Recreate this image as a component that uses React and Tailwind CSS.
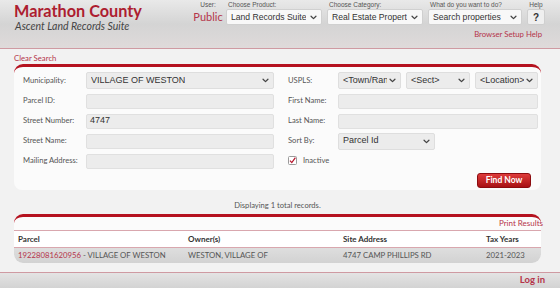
import React from "react";

const Chevron = ({ className = "" }) => (
  <svg viewBox="0 0 10 6" className={"w-[7px] h-[5px] " + className} fill="none" stroke="#444" strokeWidth="1.8" strokeLinecap="round" strokeLinejoin="round">
    <path d="M1.5 1.2 L5 4.6 L8.5 1.2" />
  </svg>
);

const HeaderSelect = ({ label, value, w }) => (
  <div className={"flex flex-col " + w}>
    <div className="h-[9px] text-[6.5px] leading-[9px] text-[#555] pl-[2px] font-['Liberation_Sans',sans-serif]">{label}</div>
    <div className="h-[16px] bg-[#f8f8f8] border border-[#d0d0d0] rounded-[2px] flex items-center justify-between pl-[4px] pr-[4px] text-[8.6px] text-[#333] font-['Liberation_Sans',sans-serif] overflow-hidden whitespace-nowrap">
      <span className="overflow-hidden">{value}</span>
      <Chevron className="shrink-0 ml-[1px]" />
    </div>
  </div>
);

const FormSelect = ({ value, w }) => (
  <div className={"h-[17px] bg-[#ececec] border border-[#dedede] rounded-[2px] flex items-center justify-between pl-[4px] pr-[4px] text-[9px] text-[#333] font-['Liberation_Sans',sans-serif] whitespace-nowrap overflow-hidden " + w}>
    <span className="overflow-hidden">{value}</span>
    <Chevron className="shrink-0 ml-[2px]" />
  </div>
);

const Input = ({ value = "", w }) => (
  <div className={"h-[15px] bg-[#ececec] border border-[#e0e0e0] rounded-[2px] flex items-center pl-[3px] text-[9px] text-[#333] font-['Liberation_Sans',sans-serif] " + w}>
    {value}
  </div>
);

const Label = ({ children, w }) => (
  <div className={"text-[7.6px] text-[#555] font-['Lato',sans-serif] whitespace-nowrap " + w}>{children}</div>
);

export default function App() {
  return (
    <div className="w-[560px] h-[288px] bg-[#f2f2f2] flex flex-col overflow-hidden font-['Lato',sans-serif]">
      {/* Header */}
      <div className="h-[49px] shrink-0 bg-gradient-to-b from-[#e9e9e9] via-[#d4d4d4] to-[#dfdada] border-b-[1.5px] border-[#cf9aa2] flex justify-between">
        <div className="pl-[14px] pt-[1px]">
          <div className="text-[16.25px] font-bold text-[#ad1d30] leading-[19px]">Marathon County</div>
          <div className="text-[10.5px] italic text-[#444] leading-[12px] pl-[1px]">Ascent Land Records Suite</div>
        </div>
        <div className="flex flex-col items-end pr-[15px] pt-[0px]">
          <div className="flex gap-[5px]">
            <div className="flex flex-col items-center w-[26px]">
              <div className="h-[9px] text-[6.5px] leading-[9px] text-[#555] font-['Liberation_Sans',sans-serif]">User:</div>
              <div className="h-[16px] flex items-center text-[11px] text-[#b5344a]">Public</div>
            </div>
            <HeaderSelect label="Choose Product:" value="Land Records Suite" w="w-[96px]" />
            <HeaderSelect label="Choose Category:" value="Real Estate Propert" w="w-[96px]" />
            <HeaderSelect label="What do you want to do?" value="Search properties" w="w-[94px]" />
            <div className="flex flex-col items-center w-[18px]">
              <div className="h-[9px] text-[6.5px] leading-[9px] text-[#555] font-['Liberation_Sans',sans-serif]">Help</div>
              <div className="h-[16px] w-[18px] bg-[#efefef] border border-[#cfcfcf] rounded-[2px] flex items-center justify-center text-[10px] font-bold text-[#333] font-['Liberation_Sans',sans-serif]">?</div>
            </div>
          </div>
          <div className="mt-[3px] mr-[3px] text-[7.75px] text-[#b5344a] leading-[12px]">Browser Setup Help</div>
        </div>
      </div>

      {/* Main */}
      <div className="flex-1 pl-[14px] pr-[19px] flex flex-col">
        <div className="pt-[4px] text-[7.75px] text-[#b5344a] leading-[10px]">Clear Search</div>
        <div className="mt-[1px] bg-[#fbfbfb] border-t-[3px] border-[#b5121f] rounded-t-[9px] rounded-b-[8px] pl-[9px] pr-[3px] pt-[3px] pb-[2px] flex flex-col">
          <div className="h-[21px] flex items-center">
            <Label w="w-[63px]">Municipality:</Label>
            <FormSelect value="VILLAGE OF WESTON" w="w-[188px]" />
            <div className="w-[14px]" />
            <Label w="w-[50px]">USPLS:</Label>
            <div className="flex gap-[5px]">
              <FormSelect value="<Town/Ran" w="w-[63px]" />
              <FormSelect value="<Sect>" w="w-[64px]" />
              <FormSelect value="<Location>" w="w-[63px]" />
            </div>
          </div>
          <div className="h-[20px] flex items-center">
            <Label w="w-[63px]">Parcel ID:</Label>
            <Input w="w-[188px]" />
            <div className="w-[14px]" />
            <Label w="w-[50px]">First Name:</Label>
            <Input w="w-[200px]" />
          </div>
          <div className="h-[20px] flex items-center">
            <Label w="w-[63px]">Street Number:</Label>
            <Input value="4747" w="w-[188px]" />
            <div className="w-[14px]" />
            <Label w="w-[50px]">Last Name:</Label>
            <Input w="w-[200px]" />
          </div>
          <div className="h-[20px] flex items-center">
            <Label w="w-[63px]">Street Name:</Label>
            <Input w="w-[188px]" />
            <div className="w-[14px]" />
            <Label w="w-[50px]">Sort By:</Label>
            <FormSelect value="Parcel Id" w="w-[97px]" />
          </div>
          <div className="h-[20px] flex items-center">
            <Label w="w-[63px]">Mailing Address:</Label>
            <Input w="w-[188px]" />
            <div className="w-[14px]" />
            <div className="flex items-center gap-[6px]">
              <svg viewBox="0 0 9 9" className="w-[9px] h-[9px]">
                <rect x="0.5" y="0.5" width="8" height="8" rx="1" fill="#fff" stroke="#9a9a9a" />
                <path d="M2 4.6 L3.8 6.6 L7.4 1.6" fill="none" stroke="#b5122a" strokeWidth="1.2" />
              </svg>
              <span className="text-[7.6px] text-[#555]">Inactive</span>
            </div>
          </div>
          <div className="flex justify-end pr-[7px] pt-[2px]">
            <div className="h-[15px] w-[54px] rounded-[3px] bg-gradient-to-b from-[#de3a3a] to-[#a80f14] border border-[#8c0c10] flex items-center justify-center text-[8.5px] font-bold text-white">Find Now</div>
          </div>
        </div>

        <div className="mt-[10px] text-center text-[7.6px] text-[#555] leading-[10px]">Displaying 1 total records.</div>

        <div className="mt-[4px] bg-[#fbfbfb] border-t-[3px] border-[#b5121f] rounded-t-[9px] rounded-b-[9px] flex flex-col">
          <div className="text-right text-[8px] text-[#b5344a] leading-[12px] -mr-[2px] h-[13px]">Print Results</div>
          <div className="h-[18px] border-t border-b border-[#d9a7ae] flex items-center text-[8px] font-bold text-[#333] bg-white">
            <div className="w-[174px] pl-[4px]">Parcel</div>
            <div className="w-[155px]">Owner(s)</div>
            <div className="w-[143px]">Site Address</div>
            <div>Tax Years</div>
          </div>
          <div className="h-[15px] bg-gradient-to-b from-[#dedede] to-[#d2d2d2] rounded-b-[9px] flex items-center text-[7.75px] text-[#555]">
            <div className="w-[174px] pl-[4px] whitespace-nowrap"><span className="text-[#b5344a]">19228081620956</span> - VILLAGE OF WESTON</div>
            <div className="w-[155px]">WESTON, VILLAGE OF</div>
            <div className="w-[143px]">4747 CAMP PHILLIPS RD</div>
            <div>2021-2023</div>
          </div>
        </div>
      </div>

      {/* Footer */}
      <div className="h-[16px] shrink-0 border-t-[1.5px] border-[#cf9aa2] bg-gradient-to-b from-[#e4e4e4] to-[#d3d3d3] flex items-center justify-end pr-[15px]">
        <span className="text-[9.5px] font-bold text-[#b5344a]">Log in</span>
      </div>
    </div>
  );
}
